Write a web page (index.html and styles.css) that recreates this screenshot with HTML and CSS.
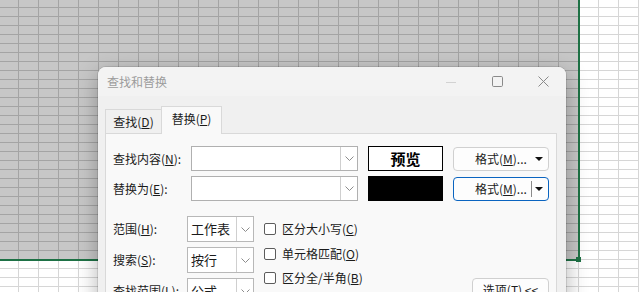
FILE: index.html
```html
<!DOCTYPE html>
<html lang="zh">
<head>
<meta charset="utf-8">
<link rel="stylesheet" href="styles.css">
</head>
<body>
<div class="sel"></div>
<div class="handle"></div>
<div class="dialog">
  <div class="titlebar">
    <span class="title">查找和替换</span>
    <div class="winctl">
      <span class="wbtn"><svg width="10" height="10" viewBox="0 0 10 10"><line x1="0" y1="5.5" x2="10" y2="5.5" stroke="#d2d2d2" stroke-width="1"/></svg></span>
      <span class="wbtn"><svg width="11" height="11" viewBox="0 0 11 11"><rect x="0.5" y="0.5" width="10" height="10" rx="1.2" fill="none" stroke="#8a8a8a" stroke-width="1"/></svg></span>
      <span class="wbtn"><svg width="11" height="11" viewBox="0 0 11 11"><path d="M0.5 0.5 L10.5 10.5 M10.5 0.5 L0.5 10.5" stroke="#8a8a8a" stroke-width="1"/></svg></span>
    </div>
  </div>
  <div class="dbody">
    <div class="tabs">
      <div class="tab">查找(<u>D</u>)</div>
      <div class="tab active">替换(<u>P</u>)</div>
    </div>
    <div class="panel">
      <div class="frow">
        <label class="flabel">查找内容(<u>N</u>):</label>
        <div class="combo"><span class="ctext"></span><span class="cbtn"><svg width="9" height="5" viewBox="0 0 9 5"><path d="M0.5 0.5 L4.5 4.5 L8.5 0.5" fill="none" stroke="#8c8c8c"/></svg></span></div>
        <div class="preview">预览</div>
        <div class="fmt"><span class="fmttext">格式(<u>M</u>)...</span><span class="fmtarrow"><svg width="8" height="4" viewBox="0 0 8 4"><path d="M0 0 H8 L4 4 Z" fill="#111"/></svg></span></div>
      </div>
      <div class="frow">
        <label class="flabel">替换为(<u>E</u>):</label>
        <div class="combo"><span class="ctext"></span><span class="cbtn"><svg width="9" height="5" viewBox="0 0 9 5"><path d="M0.5 0.5 L4.5 4.5 L8.5 0.5" fill="none" stroke="#8c8c8c"/></svg></span></div>
        <div class="preview black"></div>
        <div class="fmt focus"><span class="fmttext">格式(<u>M</u>)...</span><span class="fmtsep"></span><span class="fmtarrow"><svg width="8" height="4" viewBox="0 0 8 4"><path d="M0 0 H8 L4 4 Z" fill="#111"/></svg></span></div>
      </div>
      <div class="opts">
        <div class="selects">
          <div class="srow">
            <label class="slabel">范围(<u>H</u>):</label>
            <div class="select"><span class="stext">工作表</span><span class="sbtn"><svg width="9" height="5" viewBox="0 0 9 5"><path d="M0.5 0.5 L4.5 4.5 L8.5 0.5" fill="none" stroke="#8c8c8c"/></svg></span></div>
          </div>
          <div class="srow">
            <label class="slabel">搜索(<u>S</u>):</label>
            <div class="select"><span class="stext">按行</span><span class="sbtn"><svg width="9" height="5" viewBox="0 0 9 5"><path d="M0.5 0.5 L4.5 4.5 L8.5 0.5" fill="none" stroke="#8c8c8c"/></svg></span></div>
          </div>
          <div class="srow">
            <label class="slabel">查找范围(<u>L</u>):</label>
            <div class="select"><span class="stext">公式</span><span class="sbtn"><svg width="9" height="5" viewBox="0 0 9 5"><path d="M0.5 0.5 L4.5 4.5 L8.5 0.5" fill="none" stroke="#8c8c8c"/></svg></span></div>
          </div>
        </div>
        <div class="checks">
          <div class="chk"><span class="box"></span><span>区分大小写(<u>C</u>)</span></div>
          <div class="chk"><span class="box"></span><span>单元格匹配(<u>O</u>)</span></div>
          <div class="chk"><span class="box"></span><span>区分全/半角(<u>B</u>)</span></div>
        </div>
        <div class="optcol">
          <div class="optbtn">选项(<u>T</u>) &lt;&lt;</div>
        </div>
      </div>
    </div>
  </div>
</div>
</body>
</html>
```
FILE: styles.css
```css
html, body {
  margin: 0;
  padding: 0;
}
body {
  width: 639px;
  height: 292px;
  overflow: hidden;
  position: relative;
  font-family: "Noto Sans CJK SC", "Noto Sans", sans-serif;
  font-size: 12px;
  color: #1b1b1b;
  background-color: #ffffff;
  background-image:
    linear-gradient(90deg, #d6d6d6 1px, transparent 1px),
    linear-gradient(180deg, #d6d6d6 1px, transparent 1px);
  background-size: 20px 9px;
  background-position: 18px 7px;
}
u { text-decoration: underline; text-underline-offset: 1px; }

.sel {
  position: absolute;
  left: 0;
  top: 0;
  width: 580px;
  height: 261px;
  box-sizing: border-box;
  border-right: 2px solid #1e7145;
  border-bottom: 2px solid #1e7145;
  background-color: #c7c7c7;
  background-image:
    linear-gradient(90deg, #a4a4a4 1px, transparent 1px),
    linear-gradient(180deg, #a4a4a4 1px, transparent 1px);
  background-size: 20px 9px;
  background-position: 18px 7px;
}
.handle {
  position: absolute;
  left: 576px;
  top: 257px;
  width: 5px;
  height: 5px;
  background: #1e7145;
}

.dialog {
  position: absolute;
  left: 98px;
  top: 67px;
  width: 468px;
  height: 250px;
  background: #f0f0f0;
  border-radius: 8px 8px 0 0;
  box-shadow: 0 0 0 1px rgba(0,0,0,0.10), 0 6px 22px rgba(0,0,0,0.30);
  display: flex;
  flex-direction: column;
  overflow: hidden;
}
.titlebar {
  height: 29px;
  flex: none;
  background: #f3f3f3;
  display: flex;
  align-items: center;
  padding-left: 9px;
}
.title {
  color: #9c9c9c;
  font-size: 12px;
  line-height: 16px;
  flex: 1;
}
.winctl {
  display: flex;
  height: 100%;
}
.wbtn {
  width: 46px;
  display: flex;
  align-items: center;
  justify-content: center;
}
.wbtn svg { display: block; }

.dbody {
  flex: 1;
  padding: 10px 9px 0 7px;
  display: flex;
  flex-direction: column;
}
.tabs {
  display: flex;
  align-items: flex-end;
  height: 27px;
  flex: none;
}
.tab {
  height: 24px;
  width: 57px;
  box-sizing: border-box;
  border: 1px solid #d9d9d9;
  border-bottom: none;
  display: flex;
  align-items: center;
  justify-content: center;
  line-height: 16px;
  background: #f0f0f0;
}
.tab.active {
  height: 28px;
  width: 61px;
  margin-left: -1px;
  margin-bottom: -1px;
  padding-bottom: 3px;
  background: #f9f9f9;
  position: relative;
  z-index: 1;
}
.panel {
  flex: 1;
  background: #f9f9f9;
  border: 1px solid #d9d9d9;
  border-bottom: none;
  padding: 12px 7px 0 7px;
  display: flex;
  flex-direction: column;
  gap: 5px;
}
.frow {
  display: flex;
  align-items: center;
  height: 25px;
}
.flabel {
  width: 78px;
  line-height: 16px;
}
.combo {
  width: 167px;
  height: 25px;
  box-sizing: border-box;
  border: 1px solid #b0b0b0;
  background: #fff;
  display: flex;
}
.ctext { flex: 1; }
.cbtn {
  width: 16px;
  border-left: 1px solid #cfcfcf;
  display: flex;
  align-items: center;
  justify-content: center;
}
.cbtn svg, .sbtn svg { display: block; }
.preview {
  margin-left: 10px;
  width: 75px;
  height: 25px;
  box-sizing: border-box;
  border: 1px solid #000;
  background: #fff;
  display: flex;
  align-items: center;
  justify-content: center;
  font-weight: bold;
  font-size: 15px;
  line-height: 18px;
  color: #000;
}
.preview.black { background: #000; }
.fmt {
  margin-left: 10px;
  width: 96px;
  height: 24px;
  box-sizing: border-box;
  border: 1px solid #d0d0d0;
  border-radius: 4px;
  background: #fdfdfd;
  display: flex;
  align-items: center;
  padding-left: 21px;
  padding-right: 4px;
}
.fmt.focus {
  border-color: #0a64c0;
}
.fmttext {
  flex: 1;
  line-height: 16px;
}
.fmtsep {
  width: 1px;
  height: 16px;
  background: #8a8a8a;
  margin-right: 1px;
}
.fmtarrow {
  width: 11px;
  display: flex;
  justify-content: center;
}
.fmtarrow svg { display: block; }

.opts {
  display: flex;
  margin-top: 10px;
}
.selects {
  display: flex;
  flex-direction: column;
  gap: 5px;
}
.srow {
  display: flex;
  align-items: center;
  height: 26px;
}
.slabel {
  width: 74px;
  line-height: 16px;
  white-space: nowrap;
}
.select {
  width: 67px;
  height: 26px;
  box-sizing: border-box;
  border: 1px solid #b8b8b8;
  background: #fff;
  display: flex;
}
.stext {
  flex: 1;
  padding-left: 3px;
  font-size: 13px;
  line-height: 24px;
}
.sbtn {
  width: 16px;
  border-left: 1px solid #cfcfcf;
  display: flex;
  align-items: center;
  justify-content: center;
}
.checks {
  margin-left: 10px;
  padding-top: 3px;
  display: flex;
  flex-direction: column;
  gap: 4.5px;
}
.chk {
  display: flex;
  align-items: center;
  height: 20px;
  gap: 6px;
  line-height: 16px;
  white-space: nowrap;
}
.box {
  width: 12px;
  height: 12px;
  box-sizing: border-box;
  border: 1px solid #5c5c5c;
  border-radius: 2px;
  background: #fff;
}
.optcol {
  flex: 1;
  display: flex;
  justify-content: flex-end;
  align-items: flex-start;
  padding-top: 62px;
}
.optbtn {
  width: 77px;
  height: 24px;
  box-sizing: border-box;
  border: 1px solid #d0d0d0;
  border-radius: 4px;
  background: #fdfdfd;
  display: flex;
  align-items: center;
  justify-content: center;
  line-height: 16px;
}
```
